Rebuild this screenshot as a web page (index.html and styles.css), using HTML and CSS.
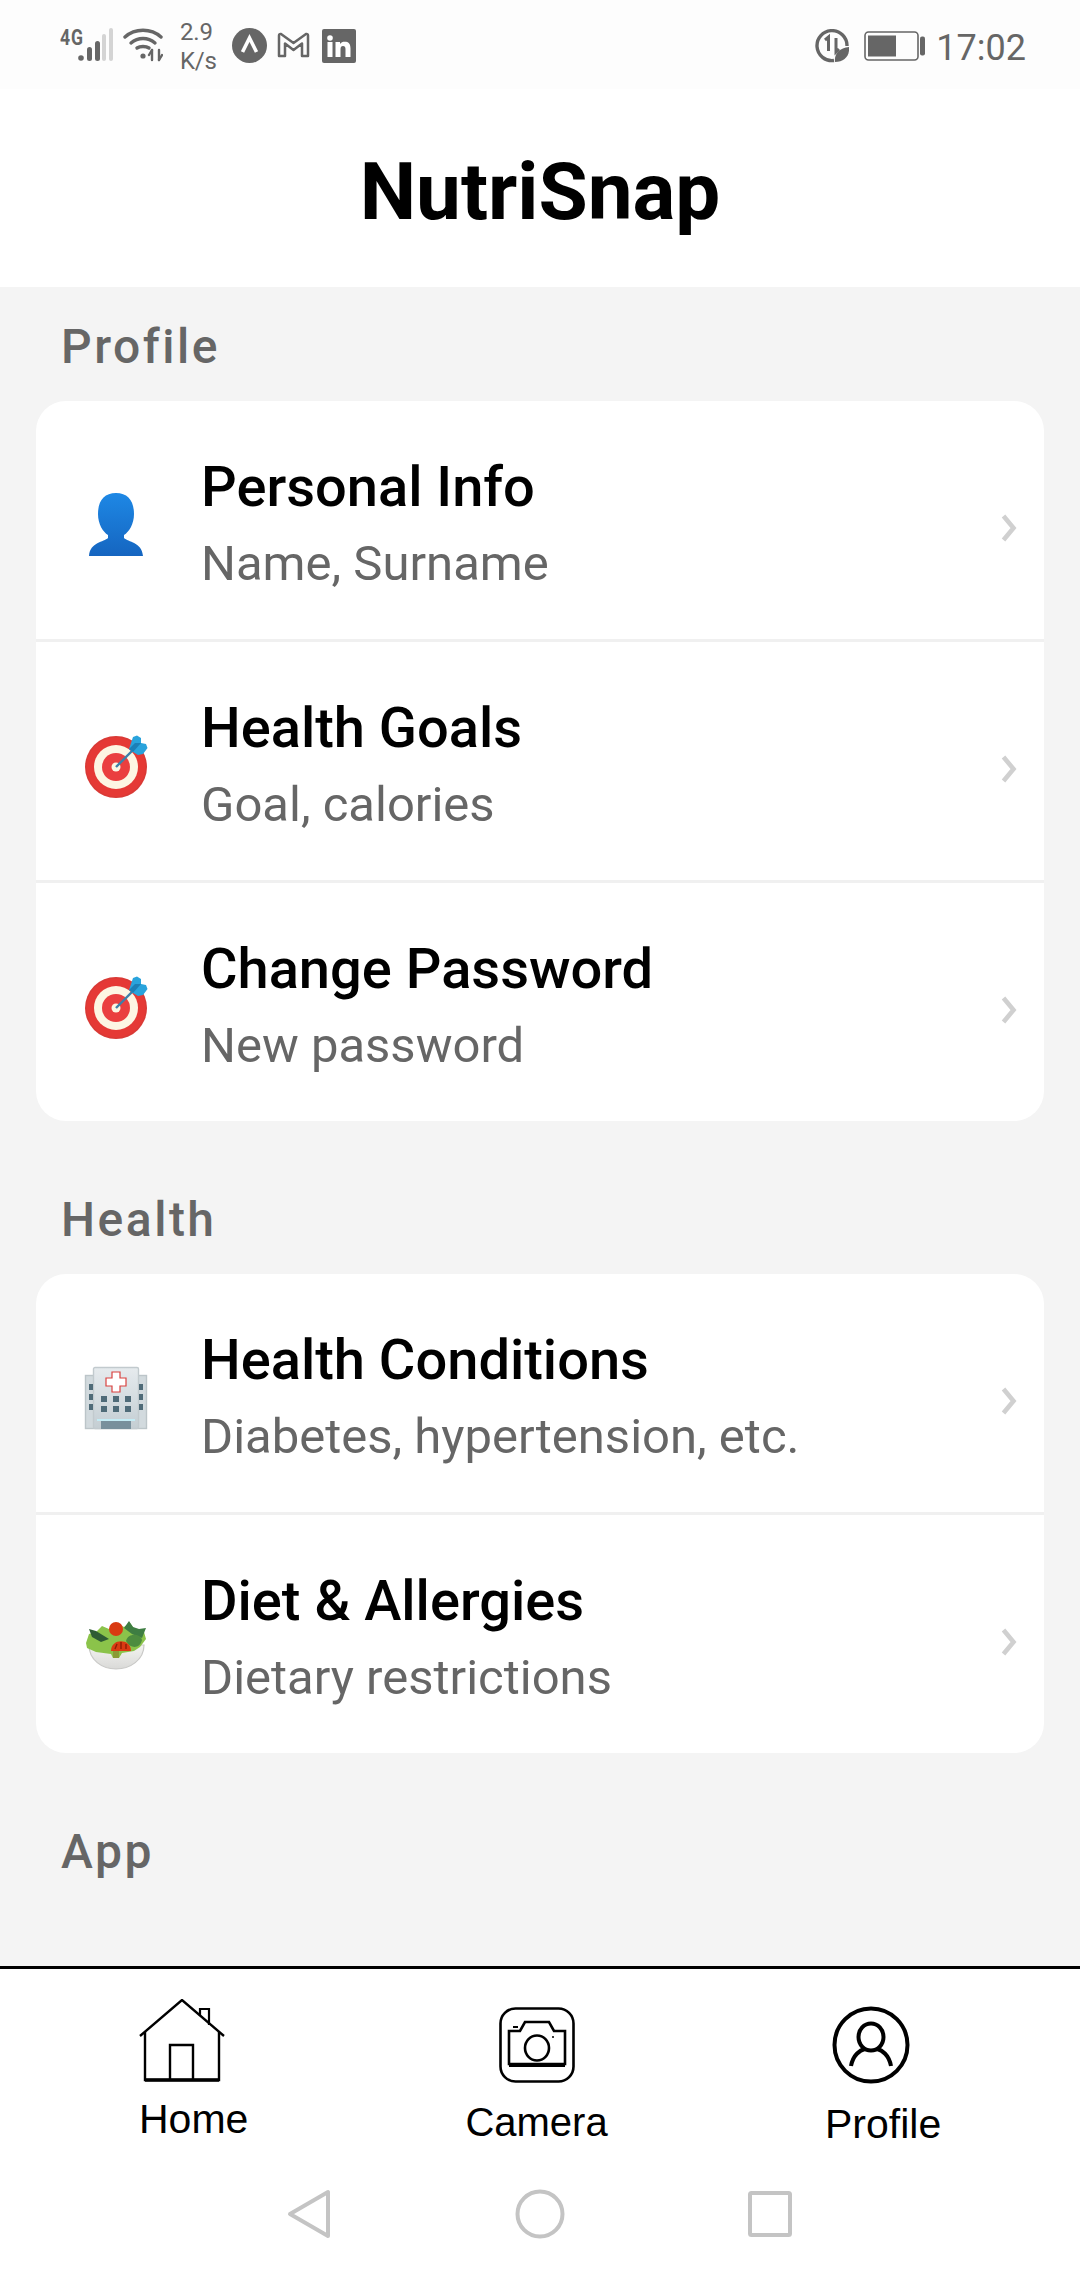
FILE: index.html
```html
<!DOCTYPE html>
<html lang="en">
<head>
<meta charset="utf-8">
<title>NutriSnap</title>
<link rel="stylesheet" href="styles.css">
</head>
<body>
<div class="app">
  <svg width="0" height="0" class="defs">
    <defs>
      <linearGradient id="pg" x1="0" y1="0" x2="0" y2="1"><stop offset="0" stop-color="#1e88e5"/><stop offset="1" stop-color="#1565c0"/></linearGradient>
      <linearGradient id="hg" x1="0" y1="0" x2="0" y2="1"><stop offset="0" stop-color="#e6ebee"/><stop offset="1" stop-color="#c4ced3"/></linearGradient>
      <linearGradient id="bg" x1="0" y1="0" x2="0" y2="1"><stop offset="0" stop-color="#f4f4f2"/><stop offset="1" stop-color="#d9d9d7"/></linearGradient>
      <symbol id="target" viewBox="0 0 64 64">
        <circle cx="32" cy="33" r="31" fill="#d93a36"/>
        <circle cx="32" cy="33" r="29.500" fill="#e53935"/>
        <circle cx="32" cy="33" r="22" fill="#fdf6e3"/>
        <circle cx="32" cy="33" r="14" fill="#ea3f3f"/>
        <circle cx="32" cy="33" r="4.500" fill="#fdf6e3"/>
        <path d="M32 33L53 12" stroke="#3d7fa8" stroke-width="2.400"/>
        <path d="M45 15L49 3 53 1.500 57 4 57 9 62 10 63.500 14 59 20 54 21 49 18z" fill="#29a3dc"/>
        <path d="M45 15L51 9 57 9 49 18z" fill="#1c7fb6"/>
      </symbol>
    </defs>
  </svg>

  <div class="status">
    <div class="status-side">
      <span class="net">4G</span>
      <svg class="i-signal" width="36" height="34" viewBox="0 0 36 34"><circle cx="3" cy="30" r="2.800" fill="#666"/><rect x="9" y="19" width="5" height="14" rx="2.500" fill="#666"/><rect x="17" y="13" width="5" height="20" rx="2.500" fill="#666"/><rect x="24" y="6" width="4" height="27" rx="2" fill="#d4d4d4"/><rect x="31" y="0" width="4" height="33" rx="2" fill="#d4d4d4"/></svg>
      <svg class="i-wifi" width="40" height="34" viewBox="0 0 40 34" fill="none" stroke="#666" stroke-width="3.400" stroke-linecap="round"><path d="M2 9C12 0 28 0 38 9"/><path d="M8 15C15 9 25 9 32 15"/><path d="M14 20C17 18 23 18 26 20"/><circle cx="20" cy="28" r="2.600" fill="#666" stroke="none"/><path d="M29 32V22M36 32V22" stroke-width="2.400"/><path d="M26 27L29 22M36 32L39 27" stroke-width="2.400"/></svg>
      <span class="speed">2.9<br>K/s</span>
      <svg class="i-arrow" width="35" height="35" viewBox="0 0 35 35"><circle cx="17.500" cy="17.500" r="17.500" fill="#666"/><path d="M10.500 24L17.500 10 24.500 24" fill="none" stroke="#fff" stroke-width="3.600"/></svg>
      <svg class="i-gm" width="33" height="26" viewBox="0 0 33 26"><path d="M2 24V3.500Q2 1.500 4 2L16.500 11 29 2Q31 1.500 31 3.500V24H25V11.500L16.500 18 8 11.500V24z" fill="none" stroke="#666" stroke-width="2.500" stroke-linejoin="round"/></svg>
      <svg class="i-in" width="34" height="34" viewBox="0 0 34 34"><rect width="34" height="34" rx="2" fill="#666"/><circle cx="8" cy="9" r="2.800" fill="#fff"/><rect x="5.500" y="13" width="5" height="15" fill="#fff"/><path d="M13.500 13H18V15C19.500 12.500 22 12.500 24 12.800 27.500 13.500 28.500 16 28.500 19.500V28H23.500V20.500C23.500 18.500 23 17 21 17 19 17 18.500 18.500 18.500 20.500V28H13.500z" fill="#fff"/></svg>
    </div>
    <div class="status-side">
      <svg class="i-saver" width="34" height="34" viewBox="0 0 34 34"><path d="M19 31.500A15 15 0 1 1 32 17" fill="none" stroke="#666" stroke-width="3.400"/><path d="M10 11L13.500 8V22M21 9V23L24 20" fill="none" stroke="#666" stroke-width="3"/><path d="M20 33C19 25 24 19 34 18 35 27 29 33 20 33z" fill="#666"/></svg>
      <svg class="i-batt" width="62" height="30" viewBox="0 0 62 30"><rect x="1" y="1" width="53" height="28" rx="3.500" fill="none" stroke="#666" stroke-width="1.600"/><rect x="4" y="4.500" width="28" height="21" fill="#666"/><rect x="56" y="5.500" width="5" height="19" rx="2" fill="#666"/></svg>
      <span class="time">17:02</span>
    </div>
  </div>

  <header class="topbar"><h1 class="brand">NutriSnap</h1></header>

  <main class="content">
    <h2 class="section-title">Profile</h2>
    <section class="card">
      <div class="row">
        <span class="emoji"><svg width="64" height="64" viewBox="0 0 64 64"><path d="M32 0C44 0 50 8 50 21 50 31 45 39 40 42V45C44 49 58 49 59 63H5C6 49 20 49 24 45V42C19 39 14 31 14 21 14 8 20 0 32 0z" fill="url(#pg)"/></svg></span>
        <div class="text"><div class="title">Personal Info</div><div class="sub">Name, Surname</div></div>
        <svg class="chev" width="16" height="28" viewBox="0 0 16 28"><path d="M2.500 2L12.500 14 2.500 26" fill="none" stroke="#d0d0d0" stroke-width="4.600"/></svg>
      </div>
      <div class="row">
        <span class="emoji"><svg width="64" height="64"><use href="#target"/></svg></span>
        <div class="text"><div class="title">Health Goals</div><div class="sub">Goal, calories</div></div>
        <svg class="chev" width="16" height="28" viewBox="0 0 16 28"><path d="M2.500 2L12.500 14 2.500 26" fill="none" stroke="#d0d0d0" stroke-width="4.600"/></svg>
      </div>
      <div class="row">
        <span class="emoji"><svg width="64" height="64"><use href="#target"/></svg></span>
        <div class="text"><div class="title">Change Password</div><div class="sub">New password</div></div>
        <svg class="chev" width="16" height="28" viewBox="0 0 16 28"><path d="M2.500 2L12.500 14 2.500 26" fill="none" stroke="#d0d0d0" stroke-width="4.600"/></svg>
      </div>
    </section>

    <h2 class="section-title">Health</h2>
    <section class="card">
      <div class="row">
        <span class="emoji"><svg width="64" height="64" viewBox="0 0 64 64"><rect x="1.500" y="9.500" width="61" height="53" fill="#d2dade" stroke="#bcc5c9" stroke-width="1.400"/><rect x="9.500" y="1.500" width="45" height="61" rx="1.500" fill="url(#hg)" stroke="#c2cace" stroke-width="1.400"/><path d="M28 6H36V12H42V20H36V26H28V20H22V12H28z" fill="#fff" stroke="#d9413f" stroke-width="1.200"/><g fill="#4f6b78"><rect x="5" y="18" width="4" height="6"/><rect x="5" y="28" width="4" height="6"/><rect x="5" y="38" width="4" height="6"/><rect x="55" y="18" width="4" height="6"/><rect x="55" y="28" width="4" height="6"/><rect x="55" y="38" width="4" height="6"/><rect x="17" y="30" width="6" height="6"/><rect x="29" y="30" width="6" height="6"/><rect x="41" y="30" width="6" height="6"/><rect x="17" y="40" width="6" height="6"/><rect x="29" y="40" width="6" height="6"/><rect x="41" y="40" width="6" height="6"/></g><rect x="13" y="53" width="38" height="2" fill="#c4ecf5"/><rect x="17" y="55" width="30" height="8" fill="#78909c"/></svg></span>
        <div class="text"><div class="title">Health Conditions</div><div class="sub">Diabetes, hypertension, etc.</div></div>
        <svg class="chev" width="16" height="28" viewBox="0 0 16 28"><path d="M2.500 2L12.500 14 2.500 26" fill="none" stroke="#d0d0d0" stroke-width="4.600"/></svg>
      </div>
      <div class="row">
        <span class="emoji"><svg width="64" height="64" viewBox="0 0 64 64"><path d="M5 38C5 53 18 62 32 62 46 62 60 53 60 38z" fill="url(#bg)" stroke="#c9c9c7" stroke-width="1.200"/><path d="M2 36L5 27 12 25 18 19 25 22 32 16 40 20 46 16 52 24 60 25 62 32 56 40 50 44 38 46 35 51 29 51 27 47 12 45 3 41z" fill="#8bc34a"/><path d="M5 22L12 24 25 32 17 35 8 30z" fill="#2e5b34"/><path d="M40 21L45 14 49 20 55 22 62 21 58 31 48 27z" fill="#3e7d42"/><path d="M42 34C44 26 56 26 58 33 56 42 46 42 42 34z" fill="#4d8c3f"/><circle cx="32" cy="22" r="7" fill="#d93a12"/><path d="M27 44C27 31 47 31 47 44z" fill="#d93a12"/><path d="M31 42L33 37M37 42L37 35M42 42L42 37" stroke="#8e1d06" stroke-width="1.400"/><path d="M29 44H35V51H29z" fill="#8a9a36"/></svg></span>
        <div class="text"><div class="title">Diet &amp; Allergies</div><div class="sub">Dietary restrictions</div></div>
        <svg class="chev" width="16" height="28" viewBox="0 0 16 28"><path d="M2.500 2L12.500 14 2.500 26" fill="none" stroke="#d0d0d0" stroke-width="4.600"/></svg>
      </div>
    </section>

    <h2 class="section-title">App</h2>
  </main>

  <nav class="tabs">
    <div class="tab tab-home">
      <svg width="86" height="84" viewBox="0 0 86 84" fill="none" stroke="#000" stroke-width="2.400"><path d="M1 37L43 1 85 37"/><path d="M6 33V81H80V33"/><path d="M31 81V46H54V81"/><path d="M61 17V10H70V26" stroke-width="2.200"/><path d="M6 81H80" stroke-width="3.400"/></svg>
      <span class="tab-label">Home</span>
    </div>
    <div class="tab tab-camera">
      <svg width="76" height="76" viewBox="0 0 76 76" fill="none" stroke="#000" stroke-width="2.600"><rect x="1.500" y="1.500" width="73" height="73" rx="15"/><path d="M10 24H21L26 15H50L55 24H66V57H10z"/><path d="M10 58H66" stroke-width="4"/><ellipse cx="38" cy="41" rx="12" ry="12.500"/><path d="M14 20H19" stroke-width="2"/><circle cx="54" cy="30" r="1" fill="#000" stroke="none"/></svg>
      <span class="tab-label">Camera</span>
    </div>
    <div class="tab tab-profile">
      <svg width="78" height="78" viewBox="0 0 78 78" fill="none" stroke="#000" stroke-width="4"><circle cx="39" cy="39" r="36.500"/><ellipse cx="39" cy="31" rx="12.500" ry="13.500"/><path d="M19 60C21 49 28 44 33 43M59 60C57 49 50 44 45 43"/></svg>
      <span class="tab-label">Profile</span>
    </div>
  </nav>

  <div class="sysnav">
    <svg width="44" height="50" viewBox="0 0 44 50" fill="none" stroke="#c4c4c4" stroke-width="4" stroke-linejoin="round"><path d="M41 3V47L3 25z"/></svg>
    <svg width="50" height="50" viewBox="0 0 50 50" fill="none" stroke="#c4c4c4" stroke-width="4"><circle cx="25" cy="25" r="22.500"/></svg>
    <svg width="44" height="46" viewBox="0 0 44 46" fill="none" stroke="#c4c4c4" stroke-width="4" stroke-linejoin="round"><rect x="2" y="2" width="40" height="42" rx="1.500"/></svg>
  </div>
</div>
</body>
</html>
```

FILE: styles.css
```css
* { box-sizing: border-box; }
html, body { margin: 0; padding: 0; }
body { font-family: Roboto, "Liberation Sans", sans-serif; background: #fff; }
.defs { display: block; position: absolute; }
.app { width: 1080px; height: 2280px; display: flex; flex-direction: column; overflow: hidden; }

.status { height: 89px; flex: none; background: #fdfdfd; display: flex; justify-content: space-between; padding: 18px 54px 0 60px; align-items: flex-start; color: #666; }
.status-side { display: flex; align-items: flex-start; }
.net { font: 700 22px/22px "Roboto", sans-serif; width: 18px; margin-top: 9px; transform: scaleX(.8); transform-origin: left top; white-space: nowrap; letter-spacing: 1px; }
.i-signal { margin-top: 10px; }
.i-wifi { margin: 10px 0 0 9px; }
.speed { font: 400 24px/29px "Roboto", sans-serif; margin: 0 0 0 17px; width: 52px; letter-spacing: -.2px; }
.i-arrow { margin-top: 10px; }
.i-gm { margin: 14px 0 0 10px; }
.i-in { margin: 11px 0 0 12px; }
.i-saver { margin-top: 11px; }
.i-batt { margin: 13px 0 0 15px; }
.time { font: 400 36px/36px "Roboto", sans-serif; margin: 12px 0 0 10px; }

.topbar { height: 198px; flex: none; background: #fff; display: flex; justify-content: center; }
.brand { margin: 0; font: 700 80px/94px Roboto, sans-serif; color: #000; padding-top: 56px; }

.content { flex: 1; min-height: 0; background: #f4f4f4; padding: 0 36px; overflow: hidden; }
.section-title { margin: 32px 0 26px; padding-left: 25px; height: 56px; font: 500 48px/56px Roboto, sans-serif; color: #666; letter-spacing: 2.500px; }
.card ~ .section-title { margin-top: 71px; }
.card { background: #fff; border-radius: 30px; overflow: hidden; }
.row { height: 241px; display: flex; align-items: center; padding: 0 27px 0 48px; border-bottom: 3px solid #f0f0f0; }
.row:last-child { height: 238px; border-bottom: 0; }
.emoji { width: 64px; height: 64px; flex: none; margin-right: 53px; margin-top: 10px; display: block; }
.emoji svg { display: block; }
.text { flex: 1; padding-top: 6px; }
.title { font: 500 56px/64px Roboto, sans-serif; color: #000; }
.sub { font: 400 49px/56px Roboto, sans-serif; color: #666; margin-top: 17px; }
.chev { flex: none; margin-top: 16px; }

.tabs { height: 216px; flex: none; background: #fff; border-top: 3px solid #000; display: flex; position: relative; }
.tab { display: flex; flex-direction: column; align-items: center; flex: none; }
.tab svg { display: block; }
.tab-label { font: 400 41px/46px "Liberation Sans", sans-serif; color: #000; }
.tab-home { width: 110px; margin: 30px 0 0 139px; align-items: flex-start; }
.tab-home .tab-label { margin-top: 13px; }
.tab-camera { width: 141px; margin: 38px 0 0 217px; }
.tab-camera .tab-label { margin-top: 16px; font-size: 40px; }
.tab-profile { width: 117px; margin: 37px 0 0 218px; align-items: flex-start; }
.tab-profile svg { margin-left: 7px; }
.tab-profile .tab-label { margin-top: 17px; }

.sysnav { height: 98px; flex: none; background: #fff; display: flex; align-items: flex-start; padding: 7px 0 0 287px; }
.sysnav svg { display: block; flex: none; }
.sysnav svg:nth-child(2) { margin-left: 184px; }
.sysnav svg:nth-child(3) { margin: 2px 0 0 183px; }
```
